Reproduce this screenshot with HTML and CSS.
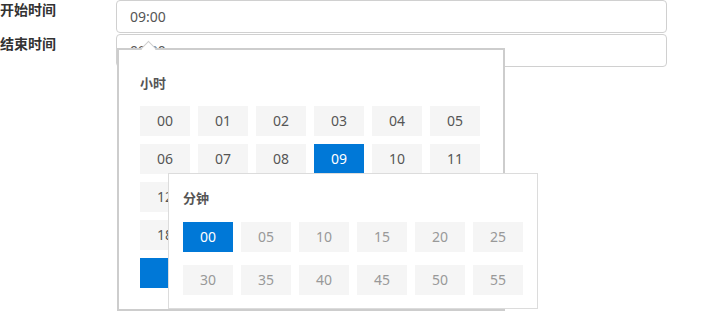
FILE: index.html
```html
<!DOCTYPE html>
<html lang="zh">
<head>
	<meta charset="utf-8">
	<title>时间选择</title>
	<link rel="stylesheet" href="styles.css">
</head>
<body>
	<div class="form">
		<div class="row">
			<label class="label">开始时间</label>
			<div class="field field-open">
				<div class="input">09:00</div>

				<div class="picker picker-hours">
					<div class="picker-title">小时</div>
					<div class="cells">
						<span class="cell">00</span><span class="cell">01</span><span class="cell">02</span>
						<span class="cell">03</span><span class="cell">04</span><span class="cell">05</span>
						<span class="cell">06</span><span class="cell">07</span><span class="cell">08</span>
						<span class="cell cell-on">09</span><span class="cell">10</span><span class="cell">11</span>
						<span class="cell">12</span><span class="cell">13</span><span class="cell">14</span>
						<span class="cell">15</span><span class="cell">16</span><span class="cell">17</span>
						<span class="cell">18</span><span class="cell">19</span><span class="cell">20</span>
						<span class="cell">21</span><span class="cell">22</span><span class="cell">23</span>
						<span class="cell cell-on"></span>
					</div>
				</div>

				<div class="picker picker-minutes">
					<div class="picker-title">分钟</div>
					<div class="cells cells-minutes">
						<span class="cell cell-on">00</span><span class="cell">05</span><span class="cell">10</span>
						<span class="cell">15</span><span class="cell">20</span><span class="cell">25</span>
						<span class="cell">30</span><span class="cell">35</span><span class="cell">40</span>
						<span class="cell">45</span><span class="cell">50</span><span class="cell">55</span>
					</div>
				</div>
			</div>
		</div>

		<div class="row">
			<label class="label">结束时间</label>
			<div class="field">
				<div class="input">09:00</div>
			</div>
		</div>
	</div>
</body>
</html>
```

FILE: styles.css
```css
body, html {
	margin: 0;
	padding: 0;
	background: #fff;
	font-family: "Noto Sans", "Noto Sans CJK SC", sans-serif;
	color: #555;
}

body {
	min-height: 100vh;
}

* {
	box-sizing: border-box;
}

.form {
	width: 667px;
	min-height: 335px;
}

.row {
	display: flex;
	margin-bottom: 1px;
}

.label {
	width: 116px;
	flex: none;
	font-size: 14px;
	line-height: 20px;
	font-weight: bold;
	color: #333;
}

.field {
	position: relative;
	flex: 1;
}

.field-open {
	z-index: 2;
}

.input {
	height: 33px;
	padding: 0 13px;
	border: 1px solid #d0d0d0;
	border-radius: 4px;
	font-size: 14px;
	line-height: 31px;
	color: #555;
	background: #fff;
}

.picker {
	position: absolute;
	background: #fff;
}

.picker-hours {
	left: 1px;
	top: 48px;
	width: 388px;
	height: 263px;
	padding: 23px 23px 21px 21px;
	border: 2px solid #cdcdcd;
}

.picker-hours::before {
	content: '';
	position: absolute;
	left: 24px;
	top: -7px;
	width: 10px;
	height: 10px;
	background: #fff;
	border-top: 1px solid #cdcdcd;
	border-left: 1px solid #cdcdcd;
	transform: rotate(45deg);
}

.picker-minutes {
	left: 52px;
	top: 173px;
	width: 370px;
	height: 136px;
	padding: 14px 14px 12px 14px;
	border: 1px solid #dcdcdc;
}

.picker-title {
	font-size: 13px;
	line-height: 20px;
	font-weight: bold;
	color: #555;
	margin-bottom: 13px;
}

.picker-minutes .picker-title {
	margin-bottom: 14px;
}

.cells {
	display: grid;
	grid-template-columns: repeat(6, 50px);
	grid-auto-rows: 30px;
	gap: 8px;
}

.cells-minutes {
	row-gap: 13px;
}

.cell {
	background: #f5f5f5;
	font-size: 14px;
	line-height: 30px;
	text-align: center;
	color: #555;
}

.cells-minutes .cell {
	color: #999;
}

.cells .cell-on {
	background: #0078d7;
	color: #fff;
}
```
